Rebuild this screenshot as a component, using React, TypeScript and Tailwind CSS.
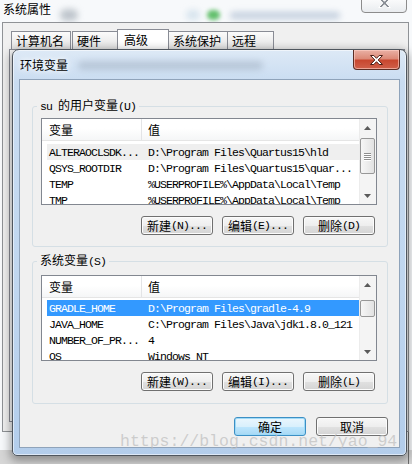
import React from "react";

const CJK = /[\u2e80-\u9fff\uff00-\uffef]/;

// mixed label: ascii runs get the narrow mono face, CJK runs the CJK face
function Txt({ text }: { text: string }) {
  const runs: { cjk: boolean; s: string }[] = [];
  for (const ch of text) {
    const cjk = CJK.test(ch);
    const last = runs[runs.length - 1];
    if (last && last.cjk === cjk) last.s += ch;
    else runs.push({ cjk, s: ch });
  }
  return (
    <>
      {runs.map((r, i) =>
        r.cjk ? (
          <span key={i} className="font-['Noto_Sans_CJK_SC',sans-serif] text-[12px]">
            {r.s}
          </span>
        ) : (
          <span
            key={i}
            className="whitespace-pre font-['Liberation_Mono','Noto_Sans_CJK_SC',monospace] text-[11.5px] tracking-[-0.9px]"
          >
            {r.s}
          </span>
        )
      )}
    </>
  );
}

function Button({ label, focused = false }: { label: string; focused?: boolean }) {
  return (
    <div
      className={
        focused
          ? "flex h-[19px] w-[72px] items-center justify-center rounded-[3px] border border-[#3c8fc4] bg-[linear-gradient(to_bottom,#eaf6fd_0%,#d9f0fc_50%,#bee6fd_51%,#a7d9f5_100%)] leading-[17px] shadow-[inset_0_0_0_1px_#9fdaf7]"
          : "flex h-[19px] w-[72px] items-center justify-center rounded-[3px] border border-[#707070] bg-[linear-gradient(to_bottom,#f7f7f7_0%,#eeeeee_50%,#e1e1e1_51%,#d4d4d4_100%)] leading-[17px] shadow-[inset_0_0_0_1px_#fcfcfc]"
      }
    >
      <Txt text={label} />
    </div>
  );
}

function Arrow({ up }: { up?: boolean }) {
  return (
    <div className="flex h-[17px] items-center justify-center">
      <svg width="7" height="4" viewBox="0 0 7 4">
        {up ? <path d="M3.5 0 L7 4 L0 4 Z" fill="#5a5a5a" /> : <path d="M0 0 L7 0 L3.5 4 Z" fill="#5a5a5a" />}
      </svg>
    </div>
  );
}

type Row = { name: string; value: string; state?: "selected" | "hover" };

function VarList({
  rows,
  heightClass,
  gapClass,
  thumbClass,
  grip,
}: {
  rows: Row[];
  heightClass: string;
  gapClass: string;
  thumbClass: string;
  grip?: boolean;
}) {
  return (
    <div className={`flex border border-[#828790] bg-white ${heightClass}`}>
      <div className="flex w-[317px] flex-col overflow-hidden">
        {/* column header */}
        <div className="flex h-[22px] shrink-0 border-b border-[#e5e5e5] bg-[linear-gradient(to_bottom,#ffffff_0%,#ffffff_45%,#f5f6f7_100%)] leading-[21px]">
          <div className="w-[100px] border-r border-[#e3e4e6] pl-[7px] font-['Noto_Sans_CJK_SC',sans-serif] text-[12px]">
            变量
          </div>
          <div className="pl-[6px] font-['Noto_Sans_CJK_SC',sans-serif] text-[12px]">值</div>
        </div>
        <div className={gapClass} />
        {rows.map((r) => (
          <div
            key={r.name}
            className={`ml-[5px] flex h-[16px] shrink-0 items-center leading-[16px] ${
              r.state === "selected" ? "bg-[#3399ff] text-white" : r.state === "hover" ? "bg-[#efefef]" : ""
            }`}
          >
            <div className="w-[95px] shrink-0 pl-[2px]">
              <Txt text={r.name} />
            </div>
            <div className="pl-[6px]">
              <Txt text={r.value} />
            </div>
          </div>
        ))}
      </div>
      {/* scrollbar */}
      <div className="flex w-[17px] flex-col bg-[#f4f4f4] shadow-[inset_1px_0_0_#ececec]">
        <Arrow up />
        <div className="flex-1">
          <div
            className={`mx-[1px] flex flex-col items-center justify-center gap-[1px] rounded-[2px] border border-[#979797] bg-[linear-gradient(to_right,#f6f6f6,#e2e2e2)] ${thumbClass}`}
          >
            {grip &&
              [0, 1, 2, 3].map((i) => <div key={i} className="h-[1px] w-[7px] bg-[#8e8e8e] shadow-[0_1px_0_#ffffff]" />)}
          </div>
        </div>
        <Arrow />
      </div>
    </div>
  );
}

function Group({
  label,
  padClass,
  children,
}: {
  label: string;
  padClass: string;
  children: React.ReactNode;
}) {
  return (
    <div className={`relative rounded-[3px] border border-[#d5dfe5] pl-[8px] pr-[10px] ${padClass}`}>
      <div className="absolute left-[4px] top-[-9px] bg-[#f0f0f0] px-[3px] leading-[14px]">
        <Txt text={label} />
      </div>
      {children}
    </div>
  );
}

function XGlyph({ fill, stroke }: { fill: string; stroke: string }) {
  return (
    <svg width="13" height="10" viewBox="0 0 13 10">
      <path
        d="M0.5 0.5 H3.8 L6.5 3.3 L9.2 0.5 H12.5 L8.2 5 L12.5 9.5 H9.2 L6.5 6.7 L3.8 9.5 H0.5 L4.8 5 Z"
        fill={fill}
        stroke={stroke}
        strokeWidth="1"
        strokeLinejoin="round"
      />
    </svg>
  );
}

const userVars: Row[] = [
  { name: "ALTERAOCLSDK...", value: "D:\\Program Files\\Quartus15\\hld", state: "hover" },
  { name: "QSYS_ROOTDIR", value: "D:\\Program Files\\Quartus15\\quar..." },
  { name: "TEMP", value: "%USERPROFILE%\\AppData\\Local\\Temp" },
  { name: "TMP", value: "%USERPROFILE%\\AppData\\Local\\Temp" },
];

const sysVars: Row[] = [
  { name: "GRADLE_HOME", value: "D:\\Program Files\\gradle-4.9", state: "selected" },
  { name: "JAVA_HOME", value: "C:\\Program Files\\Java\\jdk1.8.0_121" },
  { name: "NUMBER_OF_PR...", value: "4" },
  { name: "OS", value: "Windows_NT" },
];

export default function App() {
  return (
    <div className="relative h-[464px] w-[412px] overflow-hidden bg-[#f7f9fb] font-['Noto_Sans_CJK_SC',sans-serif] text-[12px] text-black">
      {/* blurred glass behind the parent title bar */}
      <div className="absolute left-[60px] top-[9px] h-[12px] w-[18px] rounded-full bg-[#9aa3ad]/60 blur-[3px]" />
      <div className="absolute left-[186px] top-[10px] h-[10px] w-[14px] rounded-full bg-[#c9dbe8]/70 blur-[3px]" />
      <div className="absolute left-[207px] top-[10px] h-[10px] w-[13px] rounded-full bg-[#3fb24a]/80 blur-[2px]" />
      <div className="absolute left-[230px] top-[12px] h-[7px] w-[110px] rounded-full bg-[#8fa6c2]/50 blur-[3px]" />

      <div className="absolute left-[3px] top-[1px] leading-[16px] [text-shadow:0_0_6px_#ffffff]">系统属性</div>

      {/* parent close button */}
      <div className="absolute left-[361px] top-[-5px] flex h-[18px] w-[46px] items-end justify-center rounded-b-[4px] border border-[#8c8c8c] bg-[linear-gradient(to_bottom,#ffffff,#e9ecef)] pb-[4px]">
        <XGlyph fill="#8a8f96" stroke="#ffffff" />
      </div>

      {/* desk strip under the windows */}
      <div className="absolute left-0 top-[450px] h-[14px] w-full bg-[#d6d6d6]" />

      {/* parent window client area */}
      <div className="absolute left-[2px] top-[22px] h-[410px] w-[407px] border border-[#8f9296] bg-[#f0f0f0]">
        <div className="flex h-[26px] items-end pl-[8px] pt-[6px]">
          {["计算机名", "硬件", "高级", "系统保护", "远程"].map((t, i) =>
            i === 2 ? (
              <div
                key={t}
                className="ml-[-1px] h-[20px] w-[52px] border border-b-0 border-[#898c95] bg-white pl-[6px] leading-[20px]"
              >
                {t}
              </div>
            ) : (
              <div
                key={t}
                className={`h-[18px] border border-b-0 border-[#898c95] bg-[linear-gradient(to_bottom,#fbfbfb,#e3e3e3)] pl-[4px] leading-[18px] ${
                  i === 0 ? "w-[60px]" : i === 1 ? "ml-[1px] w-[46px]" : i === 3 ? "ml-[-1px] w-[60px]" : "ml-[-1px] w-[47px]"
                }`}
              >
                {t}
              </div>
            )
          )}
        </div>
        <div className="ml-[6px] mr-[3px] h-[373px] border border-[#898c95] bg-[#fbfbfb]" />
      </div>

      <div className="absolute left-[408px] top-[432px] h-[32px] w-[1px] bg-[#6f6f6f]" />

      {/* 环境变量 dialog */}
      <div className="absolute left-[12px] top-[49px] flex w-[395px] flex-col rounded-t-[7px] rounded-b-[5px] border border-[#4f565e] bg-[linear-gradient(to_bottom,#dde9f6_0%,#c9dcf1_8%,#bfd6ef_60%,#b3cdeb_100%)] px-[6px] pb-[7px] shadow-[0_3px_10px_2px_rgba(0,0,0,0.35),inset_0_0_0_1px_rgba(255,255,255,0.55)]">
        <div className="relative h-[29px]">
          <div className="absolute left-[59px] top-[11px] h-[9px] w-[185px] rounded-full bg-[#97a7b8]/45 blur-[3px]" />
          <div className="relative pl-[1px] pt-[8px] leading-[14px] [text-shadow:0_0_5px_#ffffff,0_0_8px_#ffffff]">
            环境变量
          </div>
          <div className="absolute right-0 top-0 flex h-[20px] w-[47px] items-center justify-center rounded-b-[4px] border border-t-0 border-[#5b2d24] bg-[linear-gradient(to_bottom,#eab1a5_0%,#dc8a78_45%,#c8472f_55%,#d0604a_100%)] shadow-[inset_0_0_0_1px_rgba(255,210,200,0.6)]">
            <XGlyph fill="#ffffff" stroke="#4a1f16" />
          </div>
        </div>

        <div className="border border-[#8fa3ba] bg-[#f0f0f0] pb-[11px] pl-[12px] pr-[11px] pt-[26px]">
          <Group label="su 的用户变量(U)" padClass="pt-[11px] pb-[11px]">
            <VarList
              rows={userVars}
              heightClass="h-[87px]"
              gapClass="h-[3px] shrink-0"
              thumbClass="mt-[2px] h-[36px]"
              grip
            />
            <div className="mt-[11px] flex justify-end gap-[9px] pr-[2px]">
              <Button label="新建(N)..." />
              <Button label="编辑(E)..." />
              <Button label="删除(D)" />
            </div>
          </Group>

          <div className="mt-[14px]">
            <Group label="系统变量(S)" padClass="pt-[13px] pb-[12px]">
              <VarList
                rows={sysVars}
                heightClass="h-[86px]"
                gapClass="h-[2px] shrink-0"
                thumbClass="mt-[7px] h-[17px]"
              />
              <div className="mt-[11px] flex justify-end gap-[9px] pr-[2px]">
                <Button label="新建(W)..." />
                <Button label="编辑(I)..." />
                <Button label="删除(L)" />
              </div>
            </Group>
          </div>

          <div className="mt-[13px] flex justify-end gap-[10px]">
            <Button label="确定" focused />
            <Button label="取消" />
          </div>
        </div>
      </div>

      {/* blog watermark laid over the screenshot */}
      <div className="pointer-events-none absolute left-[120px] top-[432px] whitespace-pre font-['Liberation_Mono',monospace] text-[16.5px] leading-[20px] text-[#bdbdbd]/70">
        https://blog.csdn.net/yao_94
      </div>
    </div>
  );
}
